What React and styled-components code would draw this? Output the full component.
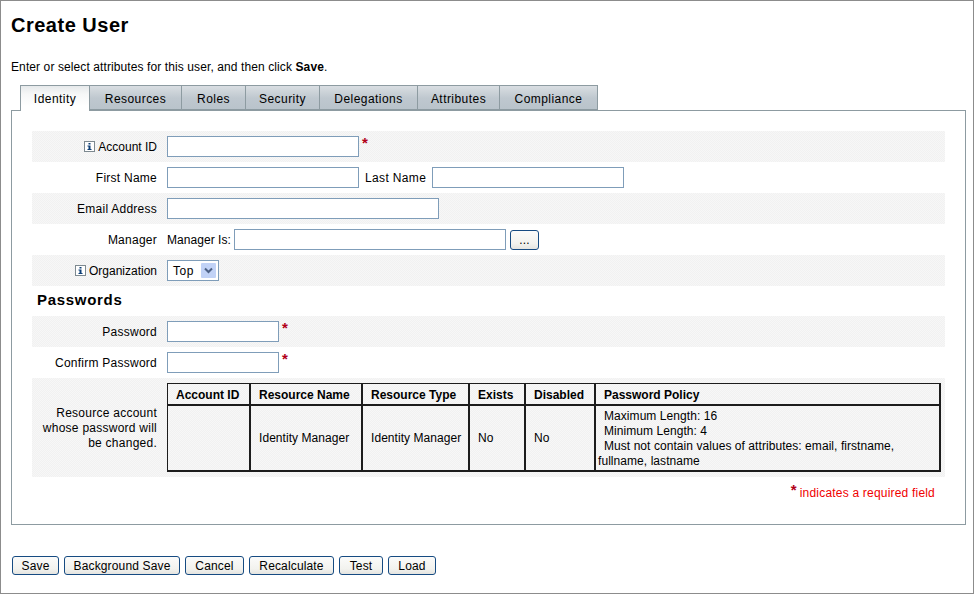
import React from 'react';
import styled, { createGlobalStyle } from 'styled-components';

const GlobalStyle = createGlobalStyle`
  html, body {
    margin: 0;
    padding: 0;
    background: #fff;
  }
  body {
    font-family: "Liberation Sans", Arial, sans-serif;
    font-size: 12px;
    color: #000;
  }
`;

const Page = styled.div`
  box-sizing: border-box;
  width: 974px;
  height: 594px;
  border: 1px solid #8c8c8c;
  padding: 0 7px 0 10px;
  overflow: hidden;
`;

const Title = styled.h1`
  margin: 0;
  padding-top: 13px;
  height: 37px;
  font-size: 20px;
  line-height: 22px;
  font-weight: bold;
  letter-spacing: 0.5px;
`;

const Help = styled.p`
  margin: 9px 0 0;
  height: 15px;
  line-height: 15px;
  letter-spacing: 0.1px;
`;

const TabBar = styled.div`
  display: flex;
  margin: 10px 0 0 9px;
  height: 25px;
  position: relative;
  z-index: 1;
`;

const Tab = styled.div`
  box-sizing: border-box;
  width: ${p => p.$w}px;
  height: ${p => (p.$active ? 26 : 25)}px;
  display: flex;
  align-items: center;
  justify-content: center;
  padding-top: ${p => (p.$active ? 1 : 2)}px;
  letter-spacing: 0.45px;
  border-top: 1px solid #8d9ba1;
  border-right: 1px solid #8d9ba1;
  border-left: ${p => (p.$first ? '1px solid #8d9ba1' : '0')};
  border-bottom: ${p => (p.$active ? '0' : '1px solid #8d9ba1')};
  background: ${p =>
    p.$active
      ? 'linear-gradient(#e6e9eb 0, #f6f7f7 8px, #fff 20px)'
      : 'linear-gradient(#d9dee2 0, #bfc8cf 12px, #b9c3cb 100%)'};
`;

const Panel = styled.div`
  box-sizing: border-box;
  width: 955px;
  height: 415px;
  border: 1px solid #8d9ba1;
  padding: 20px 20px 0;
`;

const Row = styled.div`
  display: flex;
  align-items: center;
  width: 913px;
  height: ${p => p.$h || 31}px;
  background: ${p =>
    p.$shaded ? 'repeating-conic-gradient(#f1f1f1 0 25%, #f7f7f7 0 50%) 0 0 / 2px 2px' : 'transparent'};
`;

const Label = styled.div`
  box-sizing: border-box;
  width: 125px;
  flex: none;
  display: flex;
  align-items: center;
  justify-content: flex-end;
  gap: 3px;
  padding-top: 2px;
  text-align: right;
  line-height: 15px;
  letter-spacing: ${p => (p.$tight ? 0 : 0.25)}px;
`;

const Field = styled.div`
  display: flex;
  align-items: center;
  margin-left: 10px;
  min-width: 0;
`;

const TextInput = styled.input`
  box-sizing: border-box;
  width: ${p => p.$w}px;
  height: 21px;
  padding: 0 3px;
  background: #fff;
  border: 1px solid #7f9db9;
  border-radius: 0;
  outline: none;
  font: inherit;
`;

const Inline = styled.span`
  margin: ${p => p.$m || '0'};
  padding-top: 1px;
  letter-spacing: ${p => p.$ls}px;
  white-space: nowrap;
`;

const Star = styled.span`
  margin: -8px 0 0 3px;
  color: #b10018;
  font-size: 15px;
  line-height: 14px;
  font-weight: bold;
`;

const Select = styled.div`
  box-sizing: border-box;
  width: 52px;
  height: 21px;
  display: flex;
  align-items: center;
  justify-content: space-between;
  padding: 0 2px 0 5px;
  background: #fff;
  border: 1px solid #7f9db9;
  letter-spacing: 0.5px;
`;

const SelectArrow = styled.span`
  width: 15px;
  height: 15px;
  display: flex;
  align-items: center;
  justify-content: center;
  border-radius: 1px;
  background: #c1d2f6;
`;

const SectionHeading = styled.h2`
  margin: 0;
  height: 30px;
  padding-left: 5px;
  font-size: 15px;
  line-height: 28px;
  font-weight: bold;
  letter-spacing: 0.7px;
`;

const Table = styled.table`
  box-sizing: border-box;
  width: 774px;
  height: 89px;
  table-layout: fixed;
  border-collapse: separate;
  border-spacing: 0;
  border-style: solid;
  border-color: #1c1c1c;
  border-width: 1px 2px 2px 1px;
`;

const Th = styled.th`
  box-sizing: border-box;
  height: 22px;
  padding: 1px 0 0 8px;
  border-bottom: 2px solid #1c1c1c;
  border-right: ${p => (p.$last ? '0' : '2px solid #1c1c1c')};
  text-align: left;
  font-weight: bold;
  letter-spacing: 0;
`;

const Td = styled.td`
  padding: 0 0 0 8px;
  border-right: 2px solid #1c1c1c;
  letter-spacing: 0.06px;
  line-height: 15px;
`;

const PolicyCell = styled(Td)`
  padding: 2px 0 0 2px;
  border-right: 0;
`;

const PolicyLine = styled.div`
  text-indent: ${p => p.$indent || 0}px;
`;

const Legend = styled.div`
  width: 903px;
  margin-top: 6px;
  display: flex;
  justify-content: flex-end;
  align-items: baseline;
  gap: 3px;
  color: #f00000;
  letter-spacing: 0.2px;
`;

const LegendStar = styled.span`
  color: #b10018;
  font-size: 15px;
  font-weight: bold;
  position: relative;
  top: -2px;
`;

const ButtonBar = styled.div`
  display: flex;
  gap: 5px;
  margin: 31px 0 0 1px;
`;

const Button = styled.button`
  box-sizing: border-box;
  width: ${p => p.$w}px;
  height: 19px;
  padding: 0;
  border: 1px solid #164b82;
  border-radius: 3px;
  background: linear-gradient(#fbfbfa, #f2f2ee 70%, #e4e4e0);
  color: #000;
  font: inherit;
  letter-spacing: 0.15px;
`;

const BrowseButton = styled(Button)`
  height: 20px;
  margin-left: 4px;
`;

const InfoBox = styled.svg`
  flex: none;
  width: 11px;
  height: 11px;
  margin-top: -2px;
`;

const InfoIcon = () => (
  <InfoBox viewBox="0 0 11 11">
    <rect x="0.5" y="0.5" width="10" height="10" fill="#fff" stroke="#7d8990" />
    <path d="M4.5 2h2v1.5h-2zM3.5 4.5h3V8h1v1h-4V8h1V5.5h-1z" fill="#0d3f77" />
  </InfoBox>
);

const tabs = [
  ['Identity', 70],
  ['Resources', 92],
  ['Roles', 64],
  ['Security', 74],
  ['Delegations', 98],
  ['Attributes', 82],
  ['Compliance', 98],
];

const columns = [
  ['Account ID', 83],
  ['Resource Name', 112],
  ['Resource Type', 107],
  ['Exists', 56],
  ['Disabled', 70],
  ['Password Policy', 343],
];

const buttons = [
  ['Save', 47],
  ['Background Save', 116],
  ['Cancel', 59],
  ['Recalculate', 85],
  ['Test', 44],
  ['Load', 48],
];

export default function App() {
  return (
    <>
      <GlobalStyle />
      <Page>
        <Title>Create User</Title>
        <Help>
          Enter or select attributes for this user, and then click <b>Save</b>.
        </Help>
        <TabBar>
          {tabs.map(([name, w], i) => (
            <Tab key={name} $w={w} $first={i === 0} $active={i === 0}>
              {name}
            </Tab>
          ))}
        </TabBar>
        <Panel>
          <Row $shaded>
            <Label $tight><InfoIcon />Account ID</Label>
            <Field>
              <TextInput $w={192} />
              <Star>*</Star>
            </Field>
          </Row>
          <Row>
            <Label>First Name</Label>
            <Field>
              <TextInput $w={192} />
              <Inline $m="0 6px 0 6px" $ls={0.35}>Last Name</Inline>
              <TextInput $w={192} />
            </Field>
          </Row>
          <Row $shaded>
            <Label>Email Address</Label>
            <Field>
              <TextInput $w={272} />
            </Field>
          </Row>
          <Row>
            <Label>Manager</Label>
            <Field>
              <Inline $m="0 3px 0 0" $ls={0.05}>Manager Is:</Inline>
              <TextInput $w={272} />
              <BrowseButton $w={29}>...</BrowseButton>
            </Field>
          </Row>
          <Row $shaded>
            <Label $tight><InfoIcon />Organization</Label>
            <Field>
              <Select>
                Top
                <SelectArrow>
                  <svg width="9" height="7" viewBox="0 0 9 7">
                    <path d="M1 1.5l3.5 3.5L8 1.5" fill="none" stroke="#4d6185" strokeWidth="2" />
                  </svg>
                </SelectArrow>
              </Select>
            </Field>
          </Row>
          <SectionHeading>Passwords</SectionHeading>
          <Row $shaded>
            <Label>Password</Label>
            <Field>
              <TextInput $w={112} />
              <Star>*</Star>
            </Field>
          </Row>
          <Row>
            <Label>Confirm Password</Label>
            <Field>
              <TextInput $w={112} />
              <Star>*</Star>
            </Field>
          </Row>
          <Row $shaded $h={99}>
            <Label>Resource account<br />whose password will<br />be changed.</Label>
            <Field>
              <Table>
                <colgroup>
                  {columns.map(([name, w]) => <col key={name} width={w} />)}
                </colgroup>
                <thead>
                  <tr>
                    {columns.map(([name], i) => (
                      <Th key={name} $last={i === columns.length - 1}>{name}</Th>
                    ))}
                  </tr>
                </thead>
                <tbody>
                  <tr>
                    <Td />
                    <Td>Identity Manager</Td>
                    <Td>Identity Manager</Td>
                    <Td>No</Td>
                    <Td>No</Td>
                    <PolicyCell>
                      <PolicyLine $indent={6}>Maximum Length: 16</PolicyLine>
                      <PolicyLine $indent={6}>Minimum Length: 4</PolicyLine>
                      <PolicyLine $indent={6}>Must not contain values of attributes: email, firstname, fullname, lastname</PolicyLine>
                    </PolicyCell>
                  </tr>
                </tbody>
              </Table>
            </Field>
          </Row>
          <Legend><LegendStar>*</LegendStar>indicates a required field</Legend>
        </Panel>
        <ButtonBar>
          {buttons.map(([name, w]) => <Button key={name} $w={w}>{name}</Button>)}
        </ButtonBar>
      </Page>
    </>
  );
}
